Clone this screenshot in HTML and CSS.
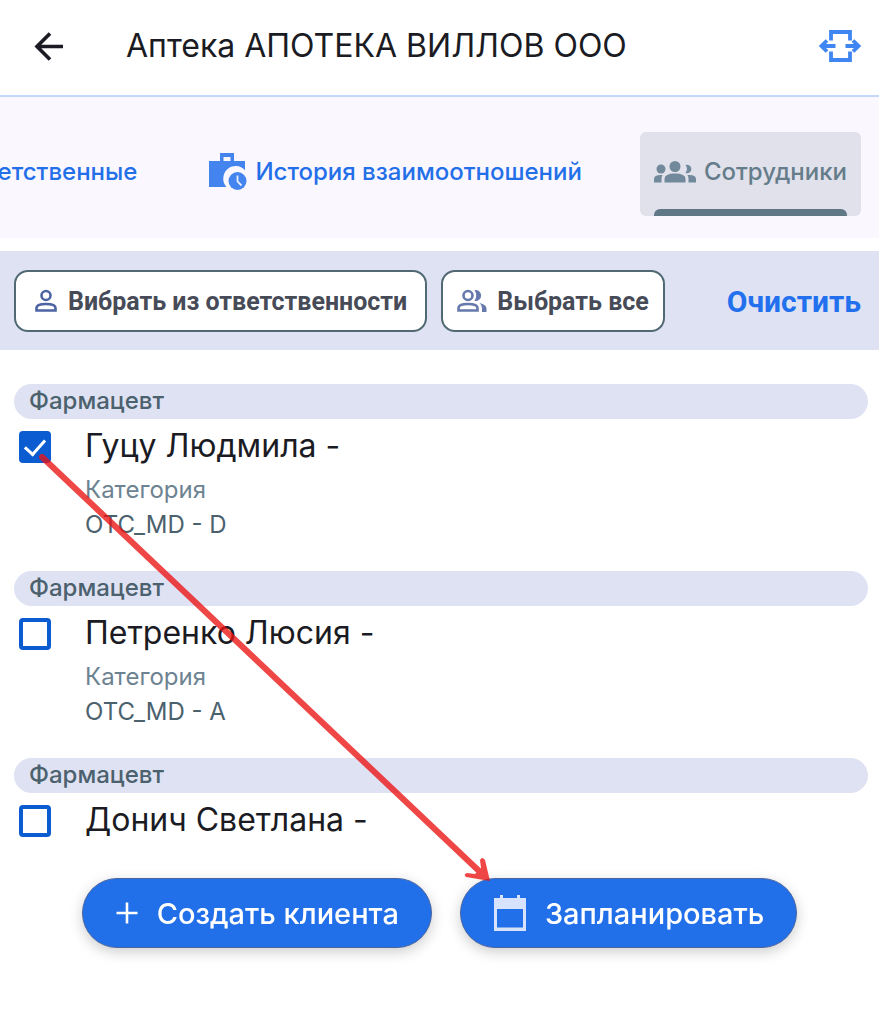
FILE: index.html
```html
<!DOCTYPE html>
<html lang="ru">
<head>
  <meta charset="UTF-8" />
  <meta name="viewport" content="width=device-width, initial-scale=1.0"/>
  <title>Аптека АПОТЕКА ВИЛЛОВ ООО</title>
  <link rel="stylesheet" href="styles.css">
</head>
<body>
  <header class="topbar">
    <button class="icon-button" aria-label="Назад">
      <svg width="30" height="30" viewBox="0 0 30 30" fill="none" stroke="#1b1b23" stroke-width="3.600">
        <path d="M29 15.500H3M16 2.500L3 15.500L16 28.500"/>
      </svg>
    </button>
    <h1>Аптека АПОТЕКА ВИЛЛОВ ООО</h1>
    <button class="icon-button" aria-label="Развернуть">
      <svg width="42" height="34" viewBox="0 0 42 34" fill="none" stroke="#3f86f2" stroke-width="3.800">
        <path d="M12 11.500V3H31V11.500M12 22.500V31H31V22.500"/>
        <path d="M2.500 17H16.500M26.500 17H39.500M8 11.500L2.500 17L8 22.500M34 11.500L39.500 17L34 22.500"/>
      </svg>
    </button>
  </header>

  <nav class="tabs">
    <a href="#responsible" class="tab">Ответственные</a>
    <a href="#history" class="tab">
      <svg width="38" height="38" viewBox="0 0 38 38">
        <path fill="#4384ee" fill-rule="evenodd" d="M0 8H11V0H25V8H36V17.200A11.500 11.500 0 0 0 17.500 34H0ZM14.500 4V8H21.500V4Z"/>
        <circle cx="28.500" cy="28" r="9" fill="#4384ee"/>
        <path d="M28.500 22.500V28.500L32.500 32.500" fill="none" stroke="#e8edfb" stroke-width="1.800"/>
      </svg>
      <span>История взаимоотношений</span>
    </a>
    <a href="#staff" class="tab active">
      <svg width="42" height="22" viewBox="0 0 42 22" fill="#71899a">
        <circle cx="21" cy="5.500" r="5.500"/>
        <circle cx="7" cy="8" r="4.500"/>
        <path d="M31.500 4a4.300 4.300 0 1 1 0 8q3-4 0-8z"/>
        <path d="M10.500 21.500V18Q10.500 12.500 21 12.500T31.500 18V21.500Z"/>
        <path d="M0 21.500V18Q0 13.500 8.500 14Q7.500 15.500 7.500 18V21.500Z"/>
        <path d="M42 21.500V18Q42 13.500 33.500 14Q34.500 15.500 34.500 18V21.500Z"/>
      </svg>
      <span>Сотрудники</span>
    </a>
  </nav>

  <div class="toolbar">
    <button class="outlined">
      <svg width="24" height="24" viewBox="0 0 24 24" fill="none" stroke="#4c63a4" stroke-width="2.600">
        <circle cx="12" cy="6.500" r="4.500"/>
        <path d="M2.500 21.500V19Q2.500 15 12 15T21.500 19V21.500Z"/>
      </svg>
      Вибрать из ответственности
    </button>
    <button class="outlined">
      <svg width="30" height="24" viewBox="0 0 30 24" fill="none" stroke="#6679ad" stroke-width="2.600">
        <circle cx="11" cy="6.500" r="4.500"/>
        <path d="M1.500 21.500V19Q1.500 15 11 15T20.500 19V21.500Z"/>
        <path fill="#6679ad" stroke="none" d="M17.500 1a5.600 5.600 0 1 1 0 11q3.500-5.500 0-11zM22.500 14Q29.500 15.500 29.500 19.500V23H25V19Q25 16 22.500 14z"/>
      </svg>
      Выбрать все
    </button>
    <button class="clear">Очистить</button>
  </div>

  <main class="people">
    <section class="group">
      <h2>Фармацевт</h2>
      <div class="person">
        <input type="checkbox" id="p1" checked>
        <div>
          <label for="p1">Гуцу Людмила -</label>
          <p class="caption">Категория</p>
          <p>OTC_MD - D</p>
        </div>
      </div>
    </section>
    <section class="group">
      <h2>Фармацевт</h2>
      <div class="person">
        <input type="checkbox" id="p2">
        <div>
          <label for="p2">Петренко Люсия -</label>
          <p class="caption">Категория</p>
          <p>OTC_MD - A</p>
        </div>
      </div>
    </section>
    <section class="group">
      <h2>Фармацевт</h2>
      <div class="person">
        <input type="checkbox" id="p3">
        <div>
          <label for="p3">Донич Светлана -</label>
        </div>
      </div>
    </section>
  </main>

  <div class="actions">
    <button>
      <svg width="24" height="24" viewBox="0 0 24 24" fill="none" stroke="#fff" stroke-width="2.600">
        <path d="M12 1.500V22.500M1.500 12H22.500"/>
      </svg>
      Создать клиента
    </button>
    <button>
      <svg width="34" height="36" viewBox="0 0 34 36" fill="#d7e3fc">
        <path fill-rule="evenodd" d="M1 3H7V0H10V3H24V0H27V3H33V36H1ZM4 14V32.500H30V14Z"/>
      </svg>
      Запланировать
    </button>
  </div>

  <!-- hint: tick a person, then plan the visit -->
  <svg class="hint" width="460" height="440" viewBox="0 0 460 440" aria-hidden="true">
    <path fill="none" stroke="#eb1313" stroke-width="6" stroke-linecap="round" d="M5 7L441 420"/>
    <path fill="#eb1313" d="M453 431L448 410Q445 406 443 410L444 418L438 424L430 423Q426 424 429 427Z"/>
  </svg>
</body>
</html>
```
FILE: styles.css
```css
* { margin: 0; padding: 0; box-sizing: border-box; }

body {
  position: relative;
  min-height: 100vh;
  overflow-x: hidden;
  font-family: Inter, sans-serif;
  background: #fff;
  color: #1b1b23;
}

button {
  font-family: inherit;
  border: none;
  background: none;
  cursor: pointer;
  white-space: nowrap;
}

svg { display: block; flex: none; }

.topbar {
  display: flex;
  align-items: center;
  height: 97px;
  padding: 0 18px 4px 34px;
  border-bottom: 2px solid #c5d7fb;
}

.topbar h1 {
  flex: 1;
  margin-left: 62px;
  font-size: 32px;
  font-weight: 400;
  line-height: 40px;
}

.tabs {
  display: flex;
  justify-content: flex-end;
  align-items: center;
  gap: 44px;
  height: 141px;
  padding: 12px 18px 0;
  overflow: hidden;
  background: #faf7ff;
}

.tab {
  position: relative;
  display: flex;
  align-items: center;
  gap: 8px;
  height: 84px;
  padding: 0 14px 4px;
  border-radius: 6px;
  font-size: 24px;
  font-weight: 500;
  color: #236fe8;
  text-decoration: none;
  white-space: nowrap;
}

.tab.active {
  background: #e0e1eb;
  color: #657c8a;
}

.tab.active::after {
  content: "";
  position: absolute;
  left: 14px;
  right: 14px;
  bottom: 0;
  height: 7px;
  border-radius: 6px 6px 0 0;
  background: #607786;
}

.toolbar {
  display: flex;
  align-items: center;
  gap: 14px;
  margin-top: 13px;
  padding: 19px 18px 18px 14px;
  background: #dfe2f3;
}

.outlined {
  display: flex;
  align-items: center;
  gap: 10px;
  height: 62px;
  padding: 0 18px;
  border: 2px solid #516973;
  border-radius: 14px;
  background: #fff;
  color: #474b58;
  font-family: Roboto, sans-serif;
  font-size: 25px;
  font-weight: 700;
}

.outlined:nth-child(2) { padding: 0 14px; }

.clear {
  margin-left: auto;
  color: #2270ee;
  font-family: Roboto, sans-serif;
  font-size: 30px;
  font-weight: 700;
}

.people { padding: 34px 11px 150px 14px; }

.group { margin-bottom: 29px; }

.group h2 {
  height: 35px;
  padding-left: 15px;
  border-radius: 18px;
  background: #dfe2f3;
  color: #4b616d;
  font-size: 24px;
  font-weight: 500;
  line-height: 34px;
}

.person {
  display: flex;
  align-items: flex-start;
  gap: 34px;
  padding: 7px 0 0 5px;
}

.person input {
  appearance: none;
  flex: none;
  display: grid;
  place-items: center;
  width: 32px;
  height: 32px;
  margin-top: 5px;
  border: 4px solid #0b5cd0;
  border-radius: 4px;
}

.person input:checked { background: #0b5cd0; }

.person input:checked::before {
  content: "";
  width: 9px;
  height: 17px;
  margin-bottom: 5px;
  border: solid #fff;
  border-width: 0 3px 3px 0;
  transform: rotate(42deg);
}

.person label {
  display: block;
  margin-bottom: 6px;
  font-size: 32px;
  line-height: 40px;
}

.person p {
  color: #4b616d;
  font-size: 24px;
  line-height: 35px;
}

.person .caption { color: #6d8391; }

.actions {
  position: fixed;
  left: 0;
  right: 0;
  bottom: 63px;
  display: flex;
  justify-content: center;
  gap: 28px;
}

.actions button {
  display: flex;
  align-items: center;
  gap: 18px;
  height: 70px;
  padding: 0 32px;
  border: 1px solid #4b659f;
  border-radius: 35px;
  background: #216fe9;
  box-shadow: 0 4px 14px rgba(0, 0, 0, 0.2);
  color: #fff;
  font-size: 29px;
  font-weight: 500;
}

.hint {
  position: absolute;
  top: 450px;
  left: 37px;
  opacity: 0.78;
  pointer-events: none;
}
```
